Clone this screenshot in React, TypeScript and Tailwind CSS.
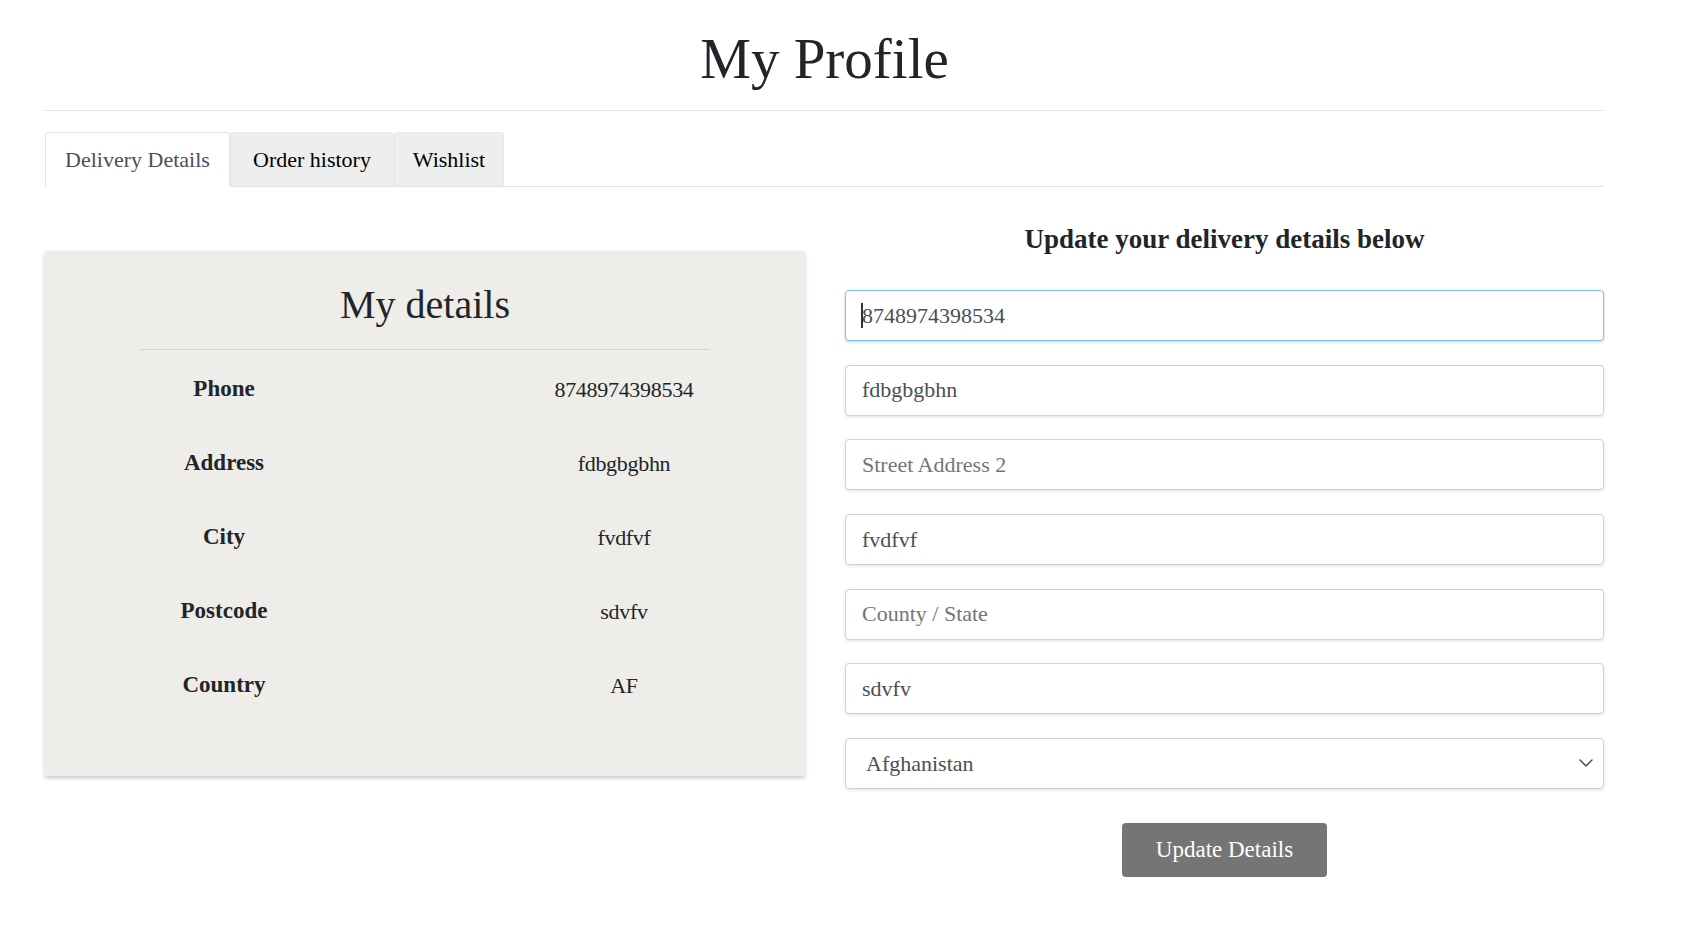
import { ChevronDown } from "lucide-react";

const details = [
  { label: "Phone", value: "8748974398534" },
  { label: "Address", value: "fdbgbgbhn" },
  { label: "City", value: "fvdfvf" },
  { label: "Postcode", value: "sdvfv" },
  { label: "Country", value: "AF" },
];

const fields = [
  { value: "fdbgbgbhn", placeholder: "Street Address 1" },
  { value: "", placeholder: "Street Address 2" },
  { value: "fvdfvf", placeholder: "Town / City" },
  { value: "", placeholder: "County / State" },
  { value: "sdvfv", placeholder: "Postcode" },
];

export default function App() {
  return (
    <div className="min-h-screen bg-white font-['Liberation_Serif',serif] text-[#212529]">
      <div className="w-[1604px] pl-[45px]">
        <h1 className="pt-[25px] pb-[18px] text-center text-[57px] leading-[67px]">My Profile</h1>
        <hr className="border-t border-[#e3e3e3]" />

        {/* tabs */}
        <div className="mt-[21px] flex border-b border-[#dee2e6]">
          <button className="-mb-px h-[55px] w-[185px] rounded-t-[4px] border border-b-white border-[#dee2e6] bg-white text-[22px] text-[#495057]">
            Delivery Details
          </button>
          <button className="h-[54px] w-[164px] rounded-t-[4px] border border-b-0 border-[#e8e8e8] bg-[#eeeeee] text-[22px] text-black">
            Order history
          </button>
          <button className="h-[54px] w-[110px] rounded-t-[4px] border border-b-0 border-[#e8e8e8] bg-[#eeeeee] text-[22px] text-black">
            Wishlist
          </button>
        </div>

        <div className="flex gap-[40px]">
          {/* my details card */}
          <div className="w-[760px] pt-[64px]">
            <div className="bg-[#eeede9] pt-[30px] pb-[54px] shadow-[0_2px_4px_rgba(0,0,0,0.22)]">
              <h2 className="text-center text-[40px] leading-[48px]">My details</h2>
              <hr className="mx-auto mt-[20px] w-[570px] border-t border-[#d5d4d0]" />
              <div className="mx-auto mt-[2px] w-[570px]">
                {details.map((d) => (
                  <div key={d.label} className="flex h-[74px] items-center">
                    <div className="w-[168px] text-center text-[23px] font-bold">{d.label}</div>
                    <div className="ml-auto w-[172px] text-center text-[22px] tracking-[-0.3px]">{d.value}</div>
                  </div>
                ))}
              </div>
            </div>
          </div>

          {/* update form */}
          <div className="w-[759px] pt-[36px]">
            <h3 className="text-center text-[27px] leading-[32px] font-bold">
              Update your delivery details below
            </h3>
            <div className="mt-[35px] flex flex-col gap-[23.7px]">
              <div className="relative">
                <input
                  defaultValue="8748974398534"
                  className="h-[51px] w-full rounded-[4px] border border-[#80bdff] bg-white px-[16px] text-[22px] text-[#495057] shadow-[0_1px_3px_rgba(0,0,0,0.18)] outline-none"
                />
                <span className="absolute top-[13px] left-[16px] h-[25px] w-[2px] bg-[#333]" />
              </div>
              {fields.map((f, i) => (
                <input
                  key={i}
                  defaultValue={f.value}
                  placeholder={f.placeholder}
                  className="h-[51px] w-full rounded-[4px] border border-[#ced4da] bg-white px-[16px] text-[22px] text-[#495057] shadow-[0_1px_3px_rgba(0,0,0,0.12)] outline-none placeholder:text-[#757575]"
                />
              ))}
              <div className="relative">
                <select className="h-[51px] w-full appearance-none rounded-[4px] border border-[#ced4da] bg-white px-[20px] text-[22px] text-[#495057] shadow-[0_1px_3px_rgba(0,0,0,0.12)] outline-none">
                  <option>Afghanistan</option>
                </select>
                <ChevronDown
                  className="pointer-events-none absolute top-[13px] right-[6px] text-[#495057]"
                  size={24}
                  strokeWidth={1.5}
                />
              </div>
            </div>
            <div className="mt-[34px] flex justify-center">
              <button className="h-[54px] w-[205px] rounded-[4px] bg-[#757575] text-[23px] text-white">
                Update Details
              </button>
            </div>
          </div>
        </div>
      </div>
    </div>
  );
}
